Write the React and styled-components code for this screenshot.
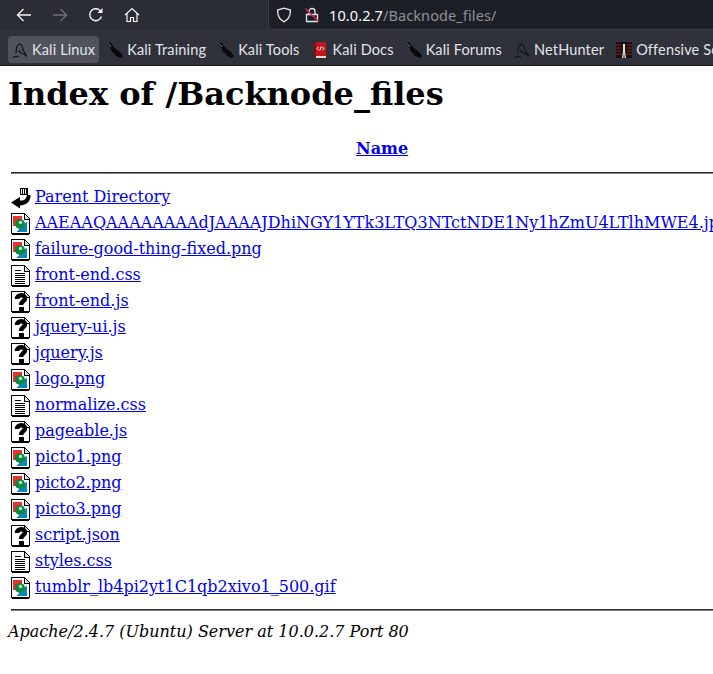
import React from "react";
import styled, { createGlobalStyle } from "styled-components";

const Global = createGlobalStyle`
  html, body { margin: 0; padding: 0; background: #fff; overflow: hidden; }
  body { width: 713px; height: 674px; font-family: "DejaVu Serif", serif; font-size: 16px; color: #000; }
`;

const files = [
  ["image", "AAEAAQAAAAAAAAdJAAAAJDhiNGY1YTk3LTQ3NTctNDE1Ny1hZmU4LTlhMWE4.jpg"],
  ["image", "failure-good-thing-fixed.png"],
  ["text", "front-end.css"],
  ["unknown", "front-end.js"],
  ["unknown", "jquery-ui.js"],
  ["unknown", "jquery.js"],
  ["image", "logo.png"],
  ["text", "normalize.css"],
  ["unknown", "pageable.js"],
  ["image", "picto1.png"],
  ["image", "picto2.png"],
  ["image", "picto3.png"],
  ["unknown", "script.json"],
  ["text", "styles.css"],
  ["image", "tumblr_lb4pi2yt1C1qb2xivo1_500.gif"],
];

const bookmarks = [
  { icon: "dragon", label: "Kali Linux", active: true },
  { icon: "knife", label: "Kali Training" },
  { icon: "knife", label: "Kali Tools" },
  { icon: "docs", label: "Kali Docs" },
  { icon: "knife", label: "Kali Forums" },
  { icon: "dragon", label: "NetHunter" },
  { icon: "offsec", label: "Offensive Security" },
];

const Dragon = () => (
  <svg width="16" height="16" viewBox="0 0 16 16" fill="none">
    <path d="M1 15.500c2-1.500 4-1.500 6-.5M4 11c0-4 1-8 3.500-9 2 0 3 3 3.500 6l2 3 2 3.500-3-2.500-3-1c-1-2-2-2.500-3-1.500" stroke="#14161a" strokeWidth="1.3" />
  </svg>
);

const Knife = () => (
  <svg width="16" height="16" viewBox="0 0 16 16">
    <path d="M0 2 3 0l3 4 2 2 2 2 2 1 4 5-2 2-5-2-2-3-2-1-1-3z" fill="#08090b" />
    <path d="M1 1.500l3 3.500" stroke="#8a8d94" strokeWidth="1" />
  </svg>
);

const Docs = () => (
  <DocsSvg width="12" height="16" viewBox="0 0 12 16">
    <rect width="12" height="16" fill="#c4161c" />
    <rect y="14" width="12" height="2" fill="#e8d9c4" />
    <rect width="2" height="16" fill="#7d1014" />
    <path d="M4.500 5 3 6.500 4.500 8M8.500 5 10 6.500 8.500 8M7.200 4.500 5.800 8.500" stroke="#fff" strokeWidth="1" fill="none" />
  </DocsSvg>
);

const Offsec = () => (
  <svg width="16" height="16" viewBox="0 0 16 16">
    <rect width="16" height="16" fill="#200c0c" />
    <path d="M0 3h5M0 6h5M0 9h5M0 12h5M11 3h5M11 6h5M11 9h5M11 12h5" stroke="#6b2a2a" strokeWidth="1" />
    <path d="M8 0v2M7 2h2v7l1 7H8.600L8 10l-.6 6H6l1-7z" fill="#e8e4e0" />
  </svg>
);

const bookmarkIcons = { dragon: Dragon, knife: Knife, docs: Docs, offsec: Offsec };

const Back = () => (
  <svg width="20" height="22" viewBox="0 0 20 22">
    <path d="M9 1h8v7h-8z" fill="#000" />
    <path d="M10 2h1v5h-1zM12 2h1v5h-1zM14 2h1v5h-1z" fill="#fff" />
    <path d="M0 15.500 9 10v3.500c3 .5 6-.5 7-5.500h3.500c.5 7-5.500 10.500-10.500 10.500v3z" fill="#000" />
  </svg>
);

const Sheet = ({ children }) => (
  <svg width="20" height="22" viewBox="0 0 20 22" shapeRendering="crispEdges">
    <path d="M0.500 0.500H13L18.500 6V20.500H0.500Z" fill="#fff" stroke="#000" />
    <path d="M13 1v5h5" fill="#d8d8d8" stroke="#000" />
    <path d="M17 21h2V7h-1v13h-1zM1 21h17v1H1z" fill="#000" />
    {children}
  </svg>
);

const ImageIcon = () => (
  <Sheet>
    <rect x="2" y="3" width="9" height="10" fill="#f42c2c" />
    <path d="M16 8v11H6z" fill="#0a86c4" />
    <circle cx="9" cy="11" r="5" fill="#0a8a3c" shapeRendering="auto" />
    <circle cx="9.500" cy="9.500" r="1.700" fill="#bfe8c8" shapeRendering="auto" />
  </Sheet>
);

const TextIcon = () => (
  <Sheet>
    <path d="M4 5h6M4 8h10M4 10h10M4 12h10M4 14h10M4 16h10M4 18h10" stroke="#000" strokeWidth="1" />
  </Sheet>
);

const UnknownIcon = () => (
  <Sheet>
    <path d="M6 8C6 3 14 3 14 7.500 14 10 10 10 10 14" fill="none" stroke="#000" strokeWidth="4.500" shapeRendering="auto" />
    <rect x="7.500" y="16" width="5" height="4" fill="#000" />
  </Sheet>
);

const fileIcons = { image: ImageIcon, text: TextIcon, unknown: UnknownIcon };

export default function App() {
  return (
    <>
      <Global />
      <Browser>
        <TopBar>
          <NavGroup>
            <NavButton>
              <svg width="16" height="16" viewBox="0 0 16 16" fill="none" stroke="currentColor" strokeWidth="1.3">
                <path d="M15 8H1.500M7.500 2 1.500 8l6 6" />
              </svg>
            </NavButton>
            <NavButton $disabled>
              <svg width="16" height="16" viewBox="0 0 16 16" fill="none" stroke="currentColor" strokeWidth="1.3">
                <path d="M1 8h13.500M8.500 2l6 6-6 6" />
              </svg>
            </NavButton>
            <NavButton>
              <svg width="16" height="16" viewBox="0 0 16 16" fill="none" stroke="currentColor" strokeWidth="1.4">
                <path d="M13.500 9.500A6 6 0 1 1 11.500 3L14 5" />
                <path d="M14.500 1v5h-5z" fill="currentColor" stroke="none" />
              </svg>
            </NavButton>
            <NavButton>
              <svg width="16" height="16" viewBox="0 0 16 16" fill="none" stroke="currentColor" strokeWidth="1.2">
                <path d="M1 8 8 1.500 15 8M3 6.500V14.500h3.500v-4h3v4H13V6.500" />
              </svg>
            </NavButton>
          </NavGroup>
          <UrlBar>
            <svg width="16" height="16" viewBox="0 0 16 16" fill="none" stroke="#e6e6e8" strokeWidth="1.3">
              <path d="M8 1.200 14.500 3c0 6-1.500 9.500-6.500 11.800C3 12.500 1.500 9 1.500 3z" />
            </svg>
            <svg width="16" height="16" viewBox="0 0 16 16" fill="none">
              <path d="M5 7V4.500a3 3 0 0 1 6 0V7M2.500 7.500h11v7h-11z" stroke="#e6e6e8" strokeWidth="1.3" />
              <path d="M1.500 1.500l13 13" stroke="#e22850" strokeWidth="1.4" />
            </svg>
            <UrlText>
              10.0.2.7<UrlPath>/Backnode_files/</UrlPath>
            </UrlText>
          </UrlBar>
        </TopBar>
        <BookmarkBar>
          {bookmarks.map((b) => {
            const Icon = bookmarkIcons[b.icon];
            return (
              <Bookmark key={b.label} $active={b.active}>
                <Icon />
                {b.label}
              </Bookmark>
            );
          })}
        </BookmarkBar>
      </Browser>
      <Page>
        <Title>Index of /Backnode_files</Title>
        <Listing>
          <tbody>
            <tr>
              <IconHead />
              <NameHead>
                <a href="#name">Name</a>
              </NameHead>
            </tr>
            <tr>
              <RuleCell colSpan={2}>
                <Rule $before={10} $after={9} />
              </RuleCell>
            </tr>
            <tr>
              <IconCell>
                <Back />
              </IconCell>
              <NameCell>
                <a href="#parent">Parent Directory</a>
              </NameCell>
            </tr>
            {files.map(([kind, name]) => {
              const Icon = fileIcons[kind];
              return (
                <tr key={name}>
                  <IconCell>
                    <Icon />
                  </IconCell>
                  <NameCell>
                    <a href={"#" + name}>{name}</a>
                  </NameCell>
                </tr>
              );
            })}
            <tr>
              <RuleCell colSpan={2}>
                <Rule $before={6} $after={8} />
              </RuleCell>
            </tr>
          </tbody>
        </Listing>
        <Address>Apache/2.4.7 (Ubuntu) Server at 10.0.2.7 Port 80</Address>
      </Page>
    </>
  );
}

const DocsSvg = styled.svg`
  margin: 0 3px 0 2px;
`;

const Browser = styled.header`
  display: flex;
  flex-direction: column;
  background: #2b2a33;
  font-family: "Noto Sans", sans-serif;
`;

const TopBar = styled.div`
  height: 30px;
  display: flex;
  align-items: flex-start;
  background: #2b2d35;
`;

const NavGroup = styled.div`
  width: 268px;
  height: 30px;
  display: flex;
  gap: 20px;
  align-items: center;
  padding-left: 16px;
  box-sizing: border-box;
`;

const NavButton = styled.span`
  display: flex;
  color: ${(p) => (p.$disabled ? "#6f7076" : "#f4f4f6")};
`;

const UrlBar = styled.div`
  flex: 1;
  height: 29px;
  display: flex;
  align-items: center;
  gap: 12px;
  padding-left: 7px;
  background: #1d1f27;
  border-left: 1px solid #3c3e46;
  border-bottom: 1px solid #3c3e46;
  border-bottom-left-radius: 5px;
`;

const UrlText = styled.span`
  font-size: 14.5px;
  letter-spacing: 0.1px;
  color: #fbfbfe;
  margin-left: -3px;
`;

const UrlPath = styled.span`
  color: #8f9096;
`;

const BookmarkBar = styled.nav`
  height: 36px;
  display: flex;
  align-items: center;
  gap: 4px;
  padding: 4px 0 0 8px;
  box-sizing: border-box;
  background: #2f323b;
  border-bottom: 1px solid #16171b;
  white-space: nowrap;
  overflow: hidden;
`;

const Bookmark = styled.span`
  flex: none;
  height: 27px;
  display: flex;
  align-items: center;
  gap: 4px;
  padding: 0 4px;
  border-radius: 4px;
  font-family: "Lato", sans-serif;
  font-size: 14.5px;
  letter-spacing: 0.15px;
  color: #e4e4e8;
  background: ${(p) => (p.$active ? "#50535c" : "transparent")};
`;

const Page = styled.main`
  padding: 8px;
  white-space: nowrap;

  a { color: #0000ee; }
`;

const Title = styled.h1`
  margin: 1px 0 23px;
  font-size: 32px;
  font-weight: bold;
  line-height: 38px;
`;

const Listing = styled.table`
  border-spacing: 2px;
`;

const IconHead = styled.th`
  padding: 1px;
`;

const NameHead = styled.th`
  padding: 1px;
  text-align: center;
  font-size: 16px;
`;

const RuleCell = styled.th`
  padding: 1px;
`;

const Rule = styled.hr`
  margin: ${(p) => p.$before}px 0 ${(p) => p.$after}px;
  border: 1px inset #808080;
`;

const IconCell = styled.td`
  width: 20px;
  height: 22px;
  padding: 1px;
  vertical-align: top;
  line-height: 0;
`;

const NameCell = styled.td`
  padding: 1px;
  vertical-align: top;
  font-size: 16px;
`;

const Address = styled.address`
  font-style: italic;
  font-size: 16px;
`;
